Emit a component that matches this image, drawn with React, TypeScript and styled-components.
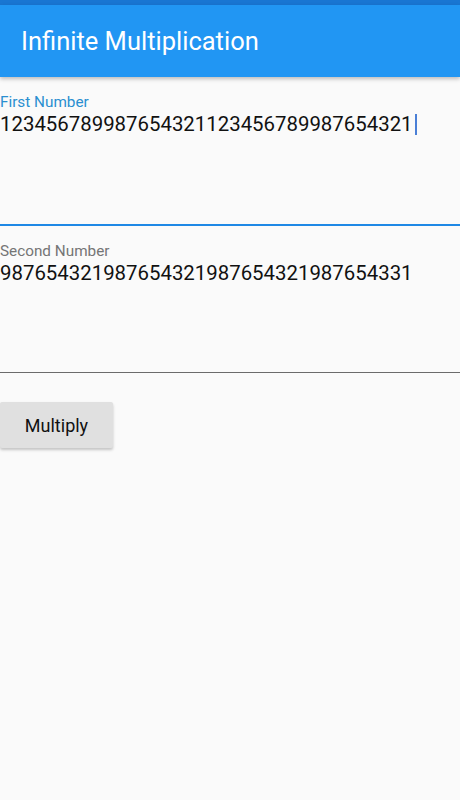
import React from "react";
import styled, { createGlobalStyle } from "styled-components";

const Global = createGlobalStyle`
  html, body { margin: 0; padding: 0; background: #fafafa; }
  body { font-family: Roboto, "Noto Sans", sans-serif; }
`;

const Page = styled.div`
  width: 460px;
  min-height: 800px;
  background: #fafafa;
  display: flex;
  flex-direction: column;
`;

const StatusBar = styled.div`
  height: 5px;
  background: #1976d2;
`;

const AppBar = styled.header`
  height: 72px;
  background: #2196f3;
  display: flex;
  align-items: center;
  padding-left: 21px;
  box-shadow: 0 2px 4px rgba(0, 0, 0, 0.25);
  position: relative;
  z-index: 1;
`;

const Title = styled.h1`
  margin: 0;
  font-size: 25.5px;
  font-weight: 400;
  color: #ffffff;
  letter-spacing: 0;
`;

const Body = styled.main`
  display: flex;
  flex-direction: column;
`;

const Field = styled.div<{ $focused?: boolean; $height: number }>`
  height: ${(p) => p.$height}px;
  padding-top: 16px;
  box-sizing: border-box;
  display: flex;
  flex-direction: column;
  border-bottom: ${(p) => (p.$focused ? "2px solid #1e88e5" : "1px solid #6b6b6b")};
`;

const Label = styled.label<{ $focused?: boolean }>`
  font-size: 15.3px;
  line-height: 18px;
  color: ${(p) => (p.$focused ? "#2a8fd0" : "#757575")};
`;

const Value = styled.div`
  font-size: 20.4px;
  line-height: 26px;
  color: #111111;
  display: flex;
  align-items: center;
`;

const Caret = styled.span`
  display: inline-block;
  width: 2px;
  height: 21px;
  margin-left: 2px;
  background: #4a7fd6;
`;

const ButtonRow = styled.div`
  padding-top: 29px;
`;

const Button = styled.button`
  width: 113px;
  height: 46px;
  border: none;
  border-radius: 2px;
  background: #e0e0e0;
  box-shadow: 0 2px 3px rgba(0, 0, 0, 0.22);
  font-family: Roboto, sans-serif;
  font-size: 18px;
  color: #111111;
  padding: 0;
`;

export default function App() {
  return (
    <Page>
      <Global />
      <StatusBar />
      <AppBar>
        <Title>Infinite Multiplication</Title>
      </AppBar>
      <Body>
        <Field $focused $height={149}>
          <Label $focused>First Number</Label>
          <Value>
            123456789987654321123456789987654321
            <Caret />
          </Value>
        </Field>
        <Field $height={147}>
          <Label>Second Number</Label>
          <Value>987654321987654321987654321987654331</Value>
        </Field>
        <ButtonRow>
          <Button>Multiply</Button>
        </ButtonRow>
      </Body>
    </Page>
  );
}
